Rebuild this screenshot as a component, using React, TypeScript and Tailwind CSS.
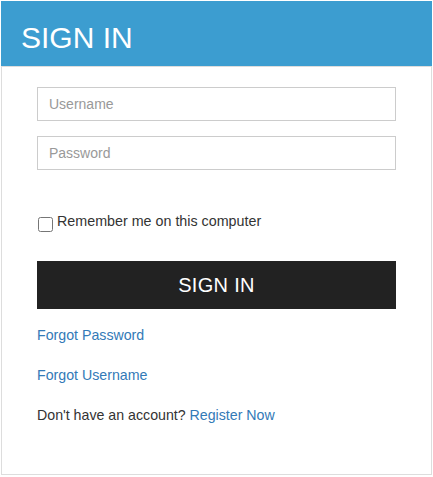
import React from "react";

export default function App() {
  return (
    <div className="m-px w-[431px] h-[474px] flex flex-col" style={{ fontFamily: '"Liberation Sans", Arial, sans-serif' }}>
      <div className="h-[65px] bg-[#3c9dd0] flex items-center pl-[20px]">
        <h1 className="text-white text-[30px] leading-none font-normal mt-[9px]">SIGN IN</h1>
      </div>
      <div className="flex-1 border border-[#dddddd] px-[35px] pt-[20px] flex flex-col">
        <input
          type="text"
          placeholder="Username"
          className="h-[34px] w-full border border-[#cccccc] px-[11px] text-[14px] text-[#555] placeholder:text-[#999] outline-none"
        />
        <input
          type="password"
          placeholder="Password"
          className="mt-[15px] h-[34px] w-full border border-[#cccccc] px-[11px] text-[14px] text-[#555] placeholder:text-[#999] outline-none"
        />
        <label className="mt-[41px] flex items-start text-[14.3px] text-[#333] leading-[20px]">
          <input type="checkbox" className="mt-[6px] ml-px mr-[4px] w-[15px] h-[15px]" />
          <span>Remember me on this computer</span>
        </label>
        <button className="mt-[29px] h-[48px] w-full bg-[#222222] text-white text-[20px] tracking-[0.3px]">SIGN IN</button>
        <a href="#" className="mt-[16px] text-[14.2px] leading-[20px] text-[#337ab7] self-start">Forgot Password</a>
        <a href="#" className="mt-[20px] text-[14.2px] leading-[20px] text-[#337ab7] self-start">Forgot Username</a>
        <p className="mt-[20px] text-[14.2px] leading-[20px] text-[#333]">
          Don't have an account? <a href="#" className="text-[#337ab7]">Register Now</a>
        </p>
      </div>
    </div>
  );
}
